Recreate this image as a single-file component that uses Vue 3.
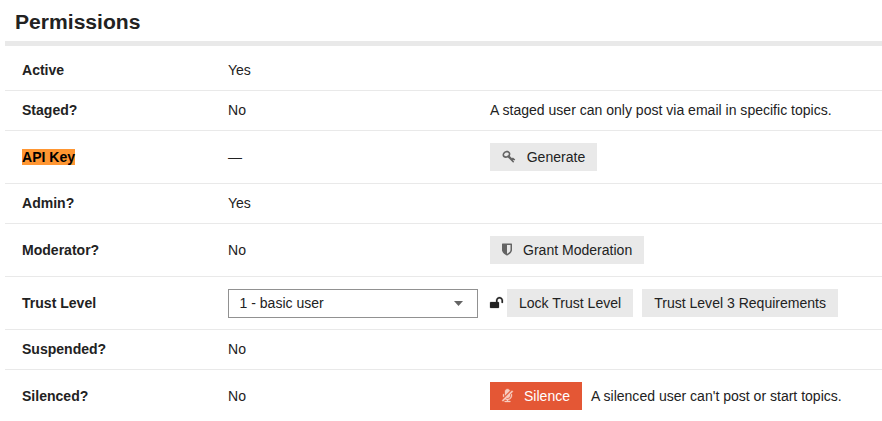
<script setup>
const icons = {
  key: {
    box: '0 0 13.7 14',
    width: 13.7,
    path: 'M3.9 .9C5.9 .3 8.2 1.6 8.4 3.7C8.5 4.6 8.2 5.3 7.8 6L10 8.2L10.9 7.4L13.3 9.6L12.3 10.6L11.5 9.9L11 10.4L12.2 11.6L11.2 12.8L5.9 7.5C3.4 8.6 .8 7.8 .5 5.3C.3 3.3 1.9 1.4 3.9 .9ZM4.3 2.5C3 2.8 1.9 4 2.1 5.1C2.3 6.2 3.8 6.4 5 5.9C6.2 5.4 7 4.6 6.7 3.5C6.4 2.6 5.3 2.3 4.3 2.5Z'
  },
  shield: {
    box: '256 -64 1280 1792',
    width: 10,
    path: 'M1344 832v-640h-448v1137q119-63 213-137 235-184 235-360zm192-768v768q0 86-33.5 170.5t-83 150-118 127.5-126.5 103-121 77.5-89.5 49.5-42.5 20q-12 6-26 6t-26-6q-16-7-42.5-20t-89.5-49.5-121-77.5-126.5-103-118-127.5-83-150-33.5-170.5v-768q0-26 19-45t45-19h1152q26 0 45 19t19 45z'
  },
  unlock: {
    box: '64 0 1664 1792',
    width: 13,
    path: 'M1728 576v256q0 26-19 45t-45 19h-64q-26 0-45-19t-19-45v-256q0-106-75-181t-181-75-181 75-75 181v192h96q40 0 68 28t28 68v576q0 40-28 68t-68 28h-960q-40 0-68-28t-28-68v-576q0-40 28-68t68-28h672v-192q0-185 131.5-316.5t316.5-131.5 316.5 131.5 131.5 316.5z'
  },
  mic: {
    box: '192 0 1408 1792',
    width: 11,
    path: 'M463 945l-101 101q-42-103-42-214v-128q0-26 19-45t45-19 45 19 19 45v128q0 53 15 113zm1114-602l-361 361v128q0 132-94 226t-226 94q-55 0-109-19l-96 96q97 51 205 51 185 0 316.5-131.5t131.5-316.5v-128q0-26 19-45t45-19 45 19 19 45v128q0 221-147.5 384.5t-364.5 187.5v132h256q26 0 45 19t19 45-19 45-45 19h-640q-26 0-45-19t-19-45 19-45 45-19h256v-132q-125-13-235-81l-254 254q-10 10-23 10t-23-10l-82-82q-10-10-10-23t10-23l1234-1234q10-10 23-10t23 10l82 82q10 10 10 23t-10 23zm-380-132l-621 621v-512q0-132 94-226t226-94q102 0 184.5 59t116.5 152z'
  }
}

const rows = [
  { label: 'Active', value: 'Yes' },
  { label: 'Staged?', value: 'No', note: 'A staged user can only post via email in specific topics.' },
  { label: 'API Key', value: '—', highlight: true, buttons: [{ text: 'Generate', icon: icons.key }] },
  { label: 'Admin?', value: 'Yes' },
  { label: 'Moderator?', value: 'No', buttons: [{ text: 'Grant Moderation', icon: icons.shield }] },
  {
    label: 'Trust Level',
    select: '1 - basic user',
    lead: icons.unlock,
    buttons: [{ text: 'Lock Trust Level' }, { text: 'Trust Level 3 Requirements' }]
  },
  { label: 'Suspended?', value: 'No' },
  {
    label: 'Silenced?',
    value: 'No',
    buttons: [{ text: 'Silence', icon: icons.mic, danger: true }],
    note: "A silenced user can't post or start topics."
  }
]
</script>

<template>
  <section class="details">
    <h1>Permissions</h1>
    <div v-for="row in rows" :key="row.label" class="row" :class="{ tall: row.buttons }">
      <div class="field"><span :class="{ highlight: row.highlight }">{{ row.label }}</span></div>
      <div class="value">
        <div v-if="row.select" class="select">
          <span>{{ row.select }}</span>
          <svg class="caret" width="9" height="5" viewBox="0 0 9 5"><path d="M0 0h9L4.5 5z" /></svg>
        </div>
        <template v-else>{{ row.value }}</template>
      </div>
      <div class="controls">
        <svg v-if="row.lead" class="lead" :width="row.lead.width" height="14" :viewBox="row.lead.box">
          <path :d="row.lead.path" />
        </svg>
        <button v-for="b in row.buttons" :key="b.text" type="button" class="btn" :class="{ danger: b.danger }">
          <svg v-if="b.icon" class="icon" :width="b.icon.width" height="14" :viewBox="b.icon.box">
            <path :d="b.icon.path" />
          </svg>
          <span>{{ b.text }}</span>
        </button>
        <span v-if="row.note">{{ row.note }}</span>
      </div>
    </div>
  </section>
</template>

<style>
body {
  margin: 0;
  background: #fff;
  overflow: hidden;
}
</style>

<style scoped>
.details {
  padding-left: 5px;
  font-family: "Liberation Sans", Arial, sans-serif;
  font-size: 14.04px;
  line-height: 16px;
  color: #222;
}
h1 {
  box-sizing: border-box;
  height: 46px;
  margin: 0 0 5px;
  padding: 10px 0 0 10px;
  border-bottom: 5px solid #e9e9e9;
  font-size: 21.1px;
  line-height: 24px;
}
.row {
  box-sizing: border-box;
  display: grid;
  grid-template-columns: 206px 262px 1fr;
  align-items: center;
  height: 40px;
  padding: 0 0 1px 17px;
  border-bottom: 1px solid #e9e9e9;
  white-space: nowrap;
}
.row.tall {
  height: 53px;
  padding-bottom: 0;
}
.row:last-child {
  border-bottom-color: transparent;
}
.field {
  font-weight: bold;
}
.highlight {
  background: #ff9632;
  color: #000;
}
.select {
  box-sizing: border-box;
  display: flex;
  align-items: center;
  justify-content: space-between;
  width: 250px;
  height: 29px;
  padding: 0 14px 0 10.5px;
  border: 1px solid #919191;
}
.caret {
  fill: #646464;
}
.controls {
  display: flex;
  align-items: center;
  gap: 9px;
}
.lead {
  margin-right: -5px;
  overflow: visible;
  fill: #222;
  stroke: #222;
  stroke-width: 30;
}
.btn {
  display: flex;
  align-items: center;
  gap: 11px;
  height: 28px;
  padding: 0 12px;
  border: 0;
  background: #e9e9e9;
  color: #222;
  font: inherit;
}
.icon {
  overflow: visible;
  fill: #646464;
  fill-rule: evenodd;
}
.danger {
  background: #e45735;
  color: #fff;
}
.danger .icon {
  fill: #f7cdc2;
  stroke: #f7cdc2;
  stroke-width: 40;
}
</style>
